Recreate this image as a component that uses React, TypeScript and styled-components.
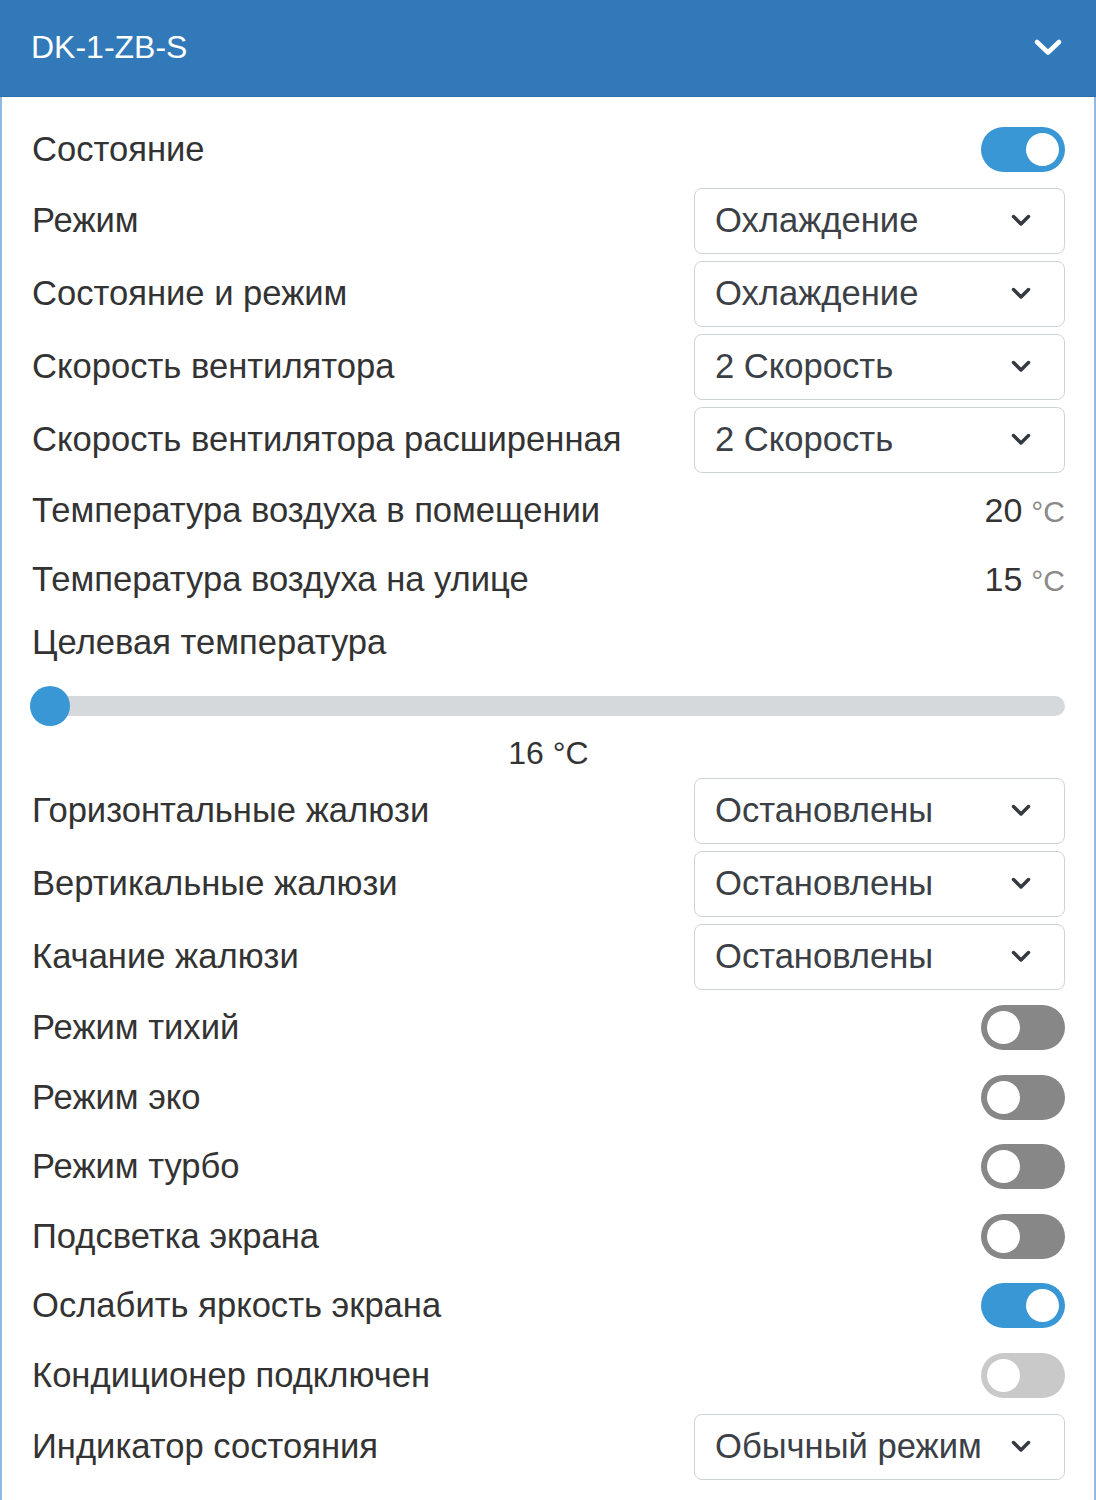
import React from "react";
import styled, { createGlobalStyle } from "styled-components";

const Global = createGlobalStyle`
  html, body { margin: 0; padding: 0; background: #ffffff; }
  body { font-family: "Liberation Sans", Arial, sans-serif; }
  * { box-sizing: border-box; }
`;

const Card = styled.div`
  width: 1096px;
  min-height: 1500px;
  border-left: 2px solid #8fbbe3;
  border-right: 2px solid #8fbbe3;
  background: #fff;
`;

const Header = styled.div`
  height: 97px;
  margin: 0 -2px;
  background: #3179b8;
  display: flex;
  align-items: center;
  justify-content: space-between;
  padding: 0 34px 0 31px;
  color: #fff;
  font-size: 32px;
  border-bottom: 1px solid #2d6fa8;
`;

const Title = styled.span`
  line-height: 1;
  margin-top: -2px;
`;

const Body = styled.div`
  display: flex;
  flex-direction: column;
  gap: 7px;
  padding: 21px 29px 22px 30px;
`;

const Row = styled.div<{ $h: number }>`
  display: flex;
  align-items: center;
  justify-content: space-between;
  height: ${(p) => p.$h}px;
`;

const Label = styled.span`
  font-size: 34.6px;
  color: #333;
  white-space: nowrap;
`;

const SelectBox = styled.div`
  width: 371px;
  height: 66px;
  border: 1.5px solid #ced3d8;
  border-radius: 8px;
  display: flex;
  align-items: center;
  justify-content: space-between;
  padding: 0 33px 0 20px;
  font-size: 34.6px;
  color: #3b4046;
  flex-shrink: 0;
`;

const Track = styled.div<{ $on: boolean; $disabled?: boolean }>`
  width: 84px;
  height: 45px;
  border-radius: 23px;
  background: ${(p) => (p.$disabled ? "#c9c9c9" : p.$on ? "#3a97d5" : "#878787")};
  display: flex;
  align-items: center;
  justify-content: ${(p) => (p.$on ? "flex-end" : "flex-start")};
  padding: 0 6px;
  flex-shrink: 0;
`;

const Knob = styled.div`
  width: 33px;
  height: 33px;
  border-radius: 50%;
  background: #fff;
`;

const ValueWrap = styled.span`
  display: flex;
  align-items: baseline;
  gap: 9px;
`;

const Value = styled.span`
  font-size: 34px;
  color: #333;
`;

const Unit = styled.span`
  font-size: 30px;
  color: #8a8a8a;
`;

const SliderBlock = styled.div`
  display: flex;
  flex-direction: column;
`;

const SliderArea = styled.div`
  height: 62px;
  display: flex;
  align-items: center;
  margin-left: -2px;
`;

const SliderTrack = styled.div`
  width: 100%;
  height: 20px;
  border-radius: 10px;
  background: #d6d9dc;
  position: relative;
`;

const SliderThumb = styled.div`
  position: absolute;
  top: 50%;
  width: 40px;
  height: 40px;
  margin-top: -20px;
  border-radius: 50%;
  background: #3a97d5;
`;

const SliderValue = styled.div`
  height: 34px;
  display: flex;
  align-items: center;
  justify-content: center;
  font-size: 32px;
  color: #333;
`;

const HeaderChevron = () => (
  <svg width="28" height="18" viewBox="0 0 28 18">
    <polyline
      points="3,3 14,13.5 25,3"
      fill="none"
      stroke="#fff"
      strokeWidth="4.5"
      strokeLinecap="round"
      strokeLinejoin="round"
    />
  </svg>
);

const SelectChevron = () => (
  <svg width="20" height="13" viewBox="0 0 20 13">
    <polyline
      points="2.5,2.5 10,10 17.5,2.5"
      fill="none"
      stroke="#343a40"
      strokeWidth="3.5"
      strokeLinecap="round"
      strokeLinejoin="round"
    />
  </svg>
);

type Item =
  | { kind: "toggle"; label: string; on: boolean; disabled?: boolean }
  | { kind: "select"; label: string; value: string }
  | { kind: "value"; label: string; value: string; unit: string }
  | { kind: "slider"; label: string; value: number; min: number; max: number; unit: string };

const items: Item[] = [
  { kind: "toggle", label: "Состояние", on: true },
  { kind: "select", label: "Режим", value: "Охлаждение" },
  { kind: "select", label: "Состояние и режим", value: "Охлаждение" },
  { kind: "select", label: "Скорость вентилятора", value: "2 Скорость" },
  { kind: "select", label: "Скорость вентилятора расширенная", value: "2 Скорость" },
  { kind: "value", label: "Температура воздуха в помещении", value: "20", unit: "°C" },
  { kind: "value", label: "Температура воздуха на улице", value: "15", unit: "°C" },
  { kind: "slider", label: "Целевая температура", value: 16, min: 16, max: 32, unit: "°C" },
  { kind: "select", label: "Горизонтальные жалюзи", value: "Остановлены" },
  { kind: "select", label: "Вертикальные жалюзи", value: "Остановлены" },
  { kind: "select", label: "Качание жалюзи", value: "Остановлены" },
  { kind: "toggle", label: "Режим тихий", on: false },
  { kind: "toggle", label: "Режим эко", on: false },
  { kind: "toggle", label: "Режим турбо", on: false },
  { kind: "toggle", label: "Подсветка экрана", on: false },
  { kind: "toggle", label: "Ослабить яркость экрана", on: true },
  { kind: "toggle", label: "Кондиционер подключен", on: false, disabled: true },
  { kind: "select", label: "Индикатор состояния", value: "Обычный режим" },
];

const renderItem = (it: Item, i: number) => {
  switch (it.kind) {
    case "toggle":
      return (
        <Row key={i} $h={62.5}>
          <Label>{it.label}</Label>
          <Track $on={it.on} $disabled={it.disabled}>
            <Knob />
          </Track>
        </Row>
      );
    case "select":
      return (
        <Row key={i} $h={66}>
          <Label>{it.label}</Label>
          <SelectBox>
            <span>{it.value}</span>
            <SelectChevron />
          </SelectBox>
        </Row>
      );
    case "value":
      return (
        <Row key={i} $h={62}>
          <Label>{it.label}</Label>
          <ValueWrap>
            <Value>{it.value}</Value>
            <Unit>{it.unit}</Unit>
          </ValueWrap>
        </Row>
      );
    case "slider": {
      const pct = (it.value - it.min) / (it.max - it.min);
      return (
        <React.Fragment key={i}>
          <Row $h={50}>
            <Label>{it.label}</Label>
          </Row>
          <SliderBlock>
            <SliderArea>
              <SliderTrack>
                <SliderThumb style={{ left: `calc(${pct * 100}% - ${pct * 40}px)` }} />
              </SliderTrack>
            </SliderArea>
            <SliderValue>
              {it.value} {it.unit}
            </SliderValue>
          </SliderBlock>
        </React.Fragment>
      );
    }
  }
};

export default function App() {
  return (
    <>
      <Global />
      <Card>
        <Header>
          <Title>DK-1-ZB-S</Title>
          <HeaderChevron />
        </Header>
        <Body>{items.map(renderItem)}</Body>
      </Card>
    </>
  );
}
